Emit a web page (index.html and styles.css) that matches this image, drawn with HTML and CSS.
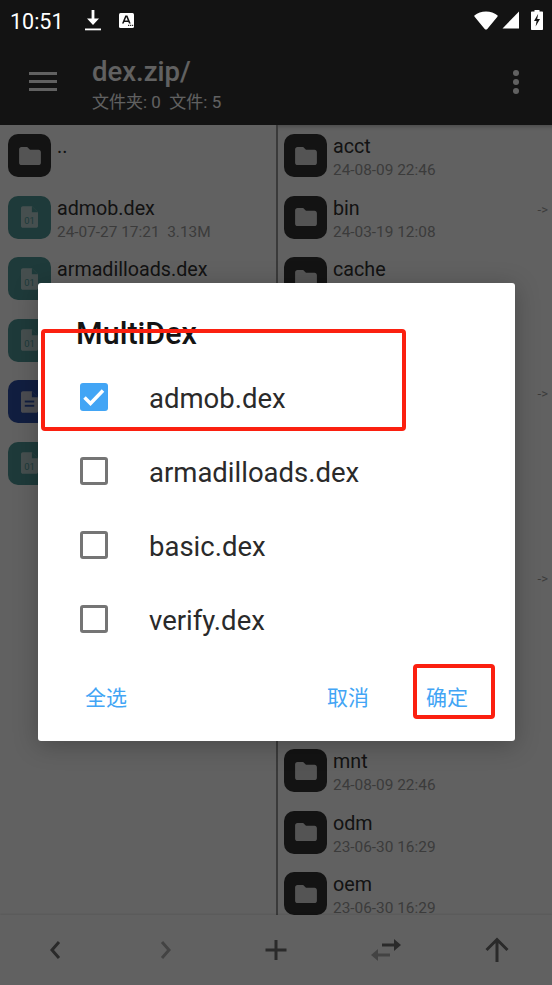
FILE: index.html
```html
<!DOCTYPE html>
<html lang="zh-CN">
<head>
    <meta charset="UTF-8">
    <meta name="viewport" content="width=device-width, initial-scale=1.0">
    <title>MultiDex</title>
    <link rel="stylesheet" href="styles.css">
</head>
<body>
    <div class="phone">
        <header class="topbar">
            <div class="statusbar">
                <span class="clock">10:51</span>
                <svg class="st-download" width="18" height="21" viewBox="0 0 18 21"><path d="M7.600 0h2.800v8.500H15L9 15 3 8.500h4.600z" fill="#fff"/><rect x="1" y="18.500" width="16" height="1.800" fill="#fff"/></svg>
                <svg class="st-badge" width="15" height="15" viewBox="0 0 15 15"><rect width="15" height="15" rx="1.500" fill="#fff"/><path d="M3 10.500 6.300 2.500h2.100L11.700 10.500H10l-.6-1.600H5.300l-.6 1.600zM5.900 7.400h2.900L7.350 3.900z" fill="#141414"/><rect x="9" y="11.800" width="1.300" height="1.100" fill="#141414"/><rect x="11" y="11.800" width="1.300" height="1.100" fill="#141414"/><rect x="13" y="11.800" width="1.200" height="1.100" fill="#141414"/></svg>
                <span class="spacer"></span>
                <svg class="st-wifi" width="24" height="19" viewBox="0 0 24 19"><path d="M12 .5c4.500 0 8.500 1.400 11.300 3.700.5.400.5 1 .1 1.500L13.300 18c-.7.800-1.900.8-2.600 0L.6 5.700c-.4-.5-.4-1.100.1-1.500C3.500 1.900 7.500.5 12 .5z" fill="#fff"/></svg>
                <svg class="st-signal" width="18" height="18" viewBox="0 0 18 18"><path d="M17 .5V17.500H.5z" fill="#fff"/></svg>
                <svg class="st-battery" width="12" height="20" viewBox="0 0 12 20"><path d="M3.500 0h5v1.500H11c.6 0 1 .4 1 1V19c0 .6-.4 1-1 1H1c-.6 0-1-.4-1-1V2.500c0-.6.4-1 1-1h2.500z" fill="#fff"/><path d="M7.200 3.800 3 11h2.600l-1 5.600L9 9H6.200z" fill="#141414"/></svg>
            </div>
            <div class="toolbar">
                <div class="menu-btn"><span></span><span></span><span></span></div>
                <div class="path-info">
                    <div class="path-name">dex.zip/</div>
                    <div class="path-sub">文件夹: 0&nbsp;&nbsp;文件: 5</div>
                </div>
                <div class="kebab"><span></span><span></span><span></span></div>
            </div>
        </header>

        <main class="panes">
            <section class="pane pane-left">
                <div class="row">
                    <div class="tile tile-folder"><svg width="22" height="18" viewBox="0 0 23 19"><use href="#folder"/></svg></div>
                    <div class="row-text"><div class="name">..</div></div>
                </div>
                <div class="row">
                    <div class="tile tile-dex"><svg width="17" height="22" viewBox="0 0 18 23"><use href="#dexfile"/></svg></div>
                    <div class="row-text"><div class="name">admob.dex</div><div class="sub">24-07-27 17:21&nbsp;&nbsp;3.13M</div></div>
                </div>
                <div class="row">
                    <div class="tile tile-dex"><svg width="17" height="22" viewBox="0 0 18 23"><use href="#dexfile"/></svg></div>
                    <div class="row-text"><div class="name">armadilloads.dex</div></div>
                </div>
                <div class="row">
                    <div class="tile tile-dex"><svg width="17" height="22" viewBox="0 0 18 23"><use href="#dexfile"/></svg></div>
                    <div class="row-text"><div class="name">basic.dex</div></div>
                </div>
                <div class="row">
                    <div class="tile tile-doc"><svg width="17" height="22" viewBox="0 0 18 23"><path d="M2 0h9.500L18 6.500V21c0 1.100-.9 2-2 2H2c-1.100 0-2-.9-2-2V2C0 .9.900 0 2 0z" fill="#c4c8d4"/><path d="M11.500 0 18 6.500h-6.500z" fill="#2f4fa8"/><rect x="4" y="10" width="10" height="2" fill="#2f4fa8"/><rect x="4" y="14.500" width="10" height="2" fill="#2f4fa8"/></svg></div>
                    <div class="row-text"><div class="name">classes.dex</div></div>
                </div>
                <div class="row">
                    <div class="tile tile-dex"><svg width="17" height="22" viewBox="0 0 18 23"><use href="#dexfile"/></svg></div>
                    <div class="row-text"><div class="name">verify.dex</div></div>
                </div>
            </section>
            <section class="pane pane-right">
                <div class="row"><div class="tile tile-folder"><svg width="22" height="18" viewBox="0 0 23 19"><use href="#folder"/></svg></div><div class="row-text"><div class="name">acct</div><div class="sub">24-08-09 22:46</div></div></div>
                <div class="row"><div class="tile tile-folder"><svg width="22" height="18" viewBox="0 0 23 19"><use href="#folder"/></svg></div><div class="row-text"><div class="name">bin</div><div class="sub">24-03-19 12:08</div></div><span class="link-mark">-&gt;</span></div>
                <div class="row"><div class="tile tile-folder"><svg width="22" height="18" viewBox="0 0 23 19"><use href="#folder"/></svg></div><div class="row-text"><div class="name">cache</div><div class="sub">24-08-09 22:46</div></div></div>
                <div class="row"><div class="tile tile-folder"><svg width="22" height="18" viewBox="0 0 23 19"><use href="#folder"/></svg></div><div class="row-text"><div class="name">config</div><div class="sub">24-08-09 22:46</div></div></div>
                <div class="row"><div class="tile tile-folder"><svg width="22" height="18" viewBox="0 0 23 19"><use href="#folder"/></svg></div><div class="row-text"><div class="name">d</div><div class="sub">24-03-19 12:08</div></div><span class="link-mark">-&gt;</span></div>
                <div class="row"><div class="tile tile-folder"><svg width="22" height="18" viewBox="0 0 23 19"><use href="#folder"/></svg></div><div class="row-text"><div class="name">data</div><div class="sub">24-08-09 22:46</div></div></div>
                <div class="row"><div class="tile tile-folder"><svg width="22" height="18" viewBox="0 0 23 19"><use href="#folder"/></svg></div><div class="row-text"><div class="name">dev</div><div class="sub">24-08-09 22:46</div></div></div>
                <div class="row"><div class="tile tile-folder"><svg width="22" height="18" viewBox="0 0 23 19"><use href="#folder"/></svg></div><div class="row-text"><div class="name">etc</div><div class="sub">24-03-19 12:08</div></div><span class="link-mark">-&gt;</span></div>
                <div class="row"><div class="tile tile-folder"><svg width="22" height="18" viewBox="0 0 23 19"><use href="#folder"/></svg></div><div class="row-text"><div class="name">lib</div><div class="sub">24-08-09 22:46</div></div></div>
                <div class="row"><div class="tile tile-folder"><svg width="22" height="18" viewBox="0 0 23 19"><use href="#folder"/></svg></div><div class="row-text"><div class="name">metadata</div><div class="sub">24-08-09 22:46</div></div></div>
                <div class="row"><div class="tile tile-folder"><svg width="22" height="18" viewBox="0 0 23 19"><use href="#folder"/></svg></div><div class="row-text"><div class="name">mnt</div><div class="sub">24-08-09 22:46</div></div></div>
                <div class="row"><div class="tile tile-folder"><svg width="22" height="18" viewBox="0 0 23 19"><use href="#folder"/></svg></div><div class="row-text"><div class="name">odm</div><div class="sub">23-06-30 16:29</div></div></div>
                <div class="row"><div class="tile tile-folder"><svg width="22" height="18" viewBox="0 0 23 19"><use href="#folder"/></svg></div><div class="row-text"><div class="name">oem</div><div class="sub">23-06-30 16:29</div></div></div>
            </section>
        </main>

        <nav class="bottombar">
            <div class="nav-item"><svg width="16" height="20" viewBox="0 0 16 20"><path d="M12 2 5 10l7 8" class="nav-stroke"/></svg></div>
            <div class="nav-item"><svg width="16" height="20" viewBox="0 0 16 20"><path d="M4 2 11 10l-7 8" class="nav-stroke nav-off"/></svg></div>
            <div class="nav-item"><svg width="24" height="24" viewBox="0 0 24 24"><path d="M12 2v20M1.500 12h21" class="nav-stroke"/></svg></div>
            <div class="nav-item"><svg width="30" height="22" viewBox="0 0 30 22"><path d="M11 6h14" class="nav-stroke"/><path d="M23 0l7 6-7 6z" fill="#6e6e6e"/><path d="M19 16H5" class="nav-stroke nav-off"/><path d="M7 10 0 16l7 6z" fill="#b0b0b0"/></svg></div>
            <div class="nav-item"><svg width="26" height="26" viewBox="0 0 26 26"><path d="M13 25V2.500M2.500 13 13 2.500 23.500 13" class="nav-stroke"/></svg></div>
        </nav>

        <div class="overlay">
            <div class="dialog">
                <h2 class="dialog-title">MultiDex</h2>
                <ul class="choice-list">
                    <li class="choice"><span class="box box-on"><svg width="28" height="28" viewBox="0 0 28 28"><path d="M4.500 14.500 10.500 20.500 23 7.500" fill="none" stroke="#fff" stroke-width="3.500"/></svg></span>admob.dex</li>
                    <li class="choice"><span class="box"></span>armadilloads.dex</li>
                    <li class="choice"><span class="box"></span>basic.dex</li>
                    <li class="choice"><span class="box"></span>verify.dex</li>
                </ul>
                <div class="dialog-actions">
                    <span class="action">全选</span>
                    <span class="spacer"></span>
                    <span class="action">取消</span>
                    <span class="action action-ok">确定</span>
                </div>
            </div>
        </div>

        <!-- 红色标注框 -->
        <div class="mark mark-item"></div>
        <div class="mark mark-ok"></div>
    </div>

    <svg class="defs" width="0" height="0">
        <defs>
            <path id="folder" d="M2.500 0h6l3 3H20.500c1.400 0 2.500 1.100 2.500 2.500v11c0 1.400-1.100 2.500-2.500 2.500h-18C1.100 19 0 17.900 0 16.500v-14C0 1.100 1.100 0 2.500 0z" fill="#dcdcdc"/>
            <g id="dexfile">
                <path d="M2 0h9.500L18 6.500V21c0 1.100-.9 2-2 2H2c-1.100 0-2-.9-2-2V2C0 .9.900 0 2 0z" fill="#b8d0d0"/>
                <path d="M11.500 0 18 6.500h-6.500z" fill="#4f9a98"/>
                <text x="9" y="19" text-anchor="middle" class="dex-num">01</text>
            </g>
        </defs>
    </svg>
</body>
</html>
```

FILE: styles.css
```css
* {
    box-sizing: border-box;
}
html, body {
    margin: 0;
    padding: 0;
}
body {
    font-family: Roboto, 'Noto Sans CJK SC', sans-serif;
    background-color: #fff;
}
.phone {
    position: relative;
    width: 552px;
    height: 985px;
    overflow: hidden;
    display: flex;
    flex-direction: column;
}
.spacer {
    flex: 1;
}
.defs {
    position: absolute;
}

/* 顶部 */
.topbar {
    height: 125px;
    background-color: #323232;
    flex-shrink: 0;
}
.statusbar {
    position: relative;
    z-index: 3; /* 状态栏不受遮罩影响 */
    height: 40px;
    padding: 0 9px 0 10px;
    display: flex;
    align-items: center;
    color: #fff;
}
.clock {
    font-size: 21.500px;
    width: 74px;
    margin-top: 2px;
}
.st-download {
    margin-right: 17px;
}
.st-wifi {
    margin-right: 4px;
}
.st-signal {
    margin-right: 11px;
}
.toolbar {
    height: 85px;
    display: flex;
    align-items: flex-start;
    padding-left: 29px;
    color: #fff;
}
.menu-btn {
    width: 28px;
    margin-top: 32px;
    margin-right: 35px;
    display: flex;
    flex-direction: column;
    gap: 5px;
}
.menu-btn span {
    display: block;
    height: 3px;
    background-color: #fff;
}
.path-info {
    flex: 1;
    margin-top: 17px;
}
.path-name {
    font-size: 27.500px;
    font-weight: 500;
    line-height: 30px;
}
.path-sub {
    font-size: 17px;
    line-height: 20px;
    margin-top: 5px;
}
.kebab {
    width: 6px;
    margin-top: 30px;
    margin-right: 33px;
    display: flex;
    flex-direction: column;
    gap: 3px;
}
.kebab span {
    display: block;
    width: 6px;
    height: 6px;
    border-radius: 50%;
    background-color: #fff;
}

/* 文件列表 */
.panes {
    flex: 1;
    min-height: 0;
    display: flex;
    background-color: #fff;
    overflow: hidden;
}
.pane {
    flex: 1;
    min-width: 0;
    padding-top: 9px;
    overflow: hidden;
}
.pane-right {
    border-left: 2px solid #9a9a9a;
    flex: 0 0 276px;
    box-shadow: inset 0 6px 6px -6px rgba(0,0,0,0.4);
}
.row {
    height: 61.500px;
    display: flex;
    align-items: flex-start;
    padding-left: 8px;
    padding-right: 8px;
}
.pane-right .row {
    padding-left: 6px;
}
.tile {
    width: 43px;
    height: 43px;
    border-radius: 10px;
    flex-shrink: 0;
    display: flex;
    align-items: center;
    justify-content: center;
}
.tile-folder {
    background-color: #323232;
}
.tile-dex {
    background-color: #4f9a98;
}
.tile-doc {
    background-color: #2f4fa8;
}
.row-text {
    margin-left: 6px;
    flex: 1;
    min-width: 0;
}
.name {
    font-size: 19.700px;
    line-height: 24px;
    margin-top: 1px;
    color: #323232;
    white-space: nowrap;
}
.sub {
    font-size: 15.400px;
    line-height: 20px;
    margin-top: 1px;
    color: #9c9c9c;
    white-space: nowrap;
}
.link-mark {
    font-size: 13px;
    line-height: 28px;
    color: #9c9c9c;
    margin-right: -4px;
}
.dex-num {
    font-family: Roboto, sans-serif;
    font-size: 10px;
    fill: #4f9a98;
}

/* 底部按钮 */
.bottombar {
    height: 70px;
    flex-shrink: 0;
    display: flex;
    background-color: #ffffff;
    box-shadow: 0 -1px 2px rgba(0,0,0,0.1);
}
.nav-item {
    flex: 1;
    display: flex;
    align-items: center;
    justify-content: center;
}
.nav-stroke {
    fill: none;
    stroke: #6e6e6e;
    stroke-width: 3;
}
.nav-off {
    stroke: #b0b0b0;
}

/* 对话框 */
.overlay {
    position: absolute;
    inset: 0;
    z-index: 2;
    background-color: rgba(0,0,0,0.62);
    padding: 283px 0 0 38px;
}
.dialog {
    width: 477px;
    height: 458px;
    background-color: #fff;
    border-radius: 3px;
    box-shadow: 0 4px 24px rgba(0,0,0,0.25);
    display: flex;
    flex-direction: column;
}
.dialog-title {
    margin: 33px 0 0 38px;
    font-size: 30.500px;
    font-weight: 500;
    line-height: 36px;
    color: #141414;
}
.choice-list {
    list-style: none;
    margin: 9px 0 0;
    padding: 0;
}
.choice {
    height: 74px;
    display: flex;
    align-items: center;
    padding-left: 42px;
    font-size: 27.500px;
    color: #2a2a2a;
}
.box {
    width: 28px;
    height: 28px;
    margin-top: -2px;
    border: 3px solid #757575;
    border-radius: 3px;
    margin-right: 41px;
    flex-shrink: 0;
}
.box-on {
    border: none;
    background-color: #42a5f5;
}
.box-on svg {
    display: block;
}
.dialog-actions {
    margin-top: 24px;
    display: flex;
    align-items: center;
    padding-left: 47px;
    padding-right: 47px;
    font-size: 21px;
    color: #42a5f5;
}
.action-ok {
    margin-left: 57px;
}

/* 标注 */
.mark {
    position: absolute;
    z-index: 4;
    border: 4px solid #fb2010;
    border-radius: 4px;
}
.mark-item {
    left: 41px;
    top: 329px;
    width: 365px;
    height: 102px;
}
.mark-ok {
    left: 413px;
    top: 664px;
    width: 82px;
    height: 55px;
}
```
